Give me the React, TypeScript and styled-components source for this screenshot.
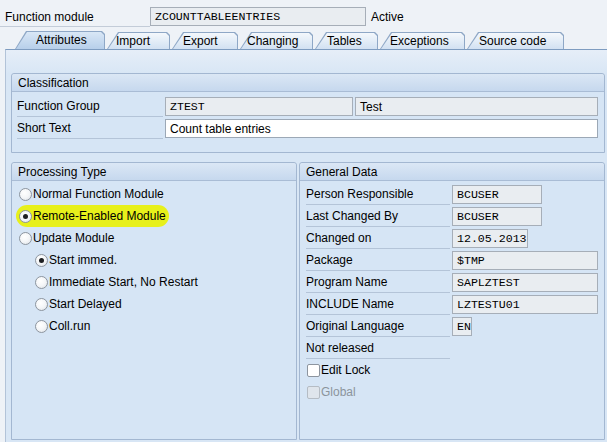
import React from 'react';
import styled, { createGlobalStyle } from 'styled-components';

const GlobalStyle = createGlobalStyle`
  html, body {
    margin: 0;
    padding: 0;
    background: #eef2f7;
  }
  body {
    font-family: 'Liberation Sans', Arial, sans-serif;
    font-size: 12px;
    color: #000;
  }
`;

const Page = styled.div`
  width: 607px;
  height: 442px;
  overflow: hidden;
  background: #eef2f7;
`;

const TopBar = styled.div`
  display: flex;
  align-items: center;
  height: 19px;
  padding-top: 7px;
`;

const TopLabel = styled.div`
  width: 150px;
  padding-left: 5px;
  height: 20px;
  line-height: 20px;
  border-bottom: 1px solid #c3ccd8;
  box-sizing: border-box;
`;

const Field = styled.div<{ $w: number; $editable?: boolean; $mono?: boolean }>`
  width: ${({ $w }) => $w}px;
  height: 19px;
  box-sizing: border-box;
  border: 1px solid ${({ $editable }) => ($editable ? '#9ca8b6' : '#a6aeb8')};
  background: ${({ $editable }) => ($editable ? '#ffffff' : '#e9edf1')};
  font-family: ${({ $mono }) =>
    $mono ? "'Liberation Mono', 'Courier New', monospace" : "'Liberation Sans', Arial, sans-serif"};
  font-size: ${({ $mono }) => ($mono ? '11.6px' : '12px')};
  line-height: 18px;
  padding-left: 4px;
  white-space: nowrap;
  overflow: hidden;
`;

const Status = styled.span`
  margin-left: 5px;
`;

const TabBar = styled.div`
  display: flex;
  align-items: flex-end;
  gap: 2px;
  height: 18px;
  margin-top: 5px;
  padding-left: 15px;
`;

const tabShape = 'polygon(11px 0, calc(100% - 3px) 0, 100% 3px, 100% 100%, 0 100%)';

const Tab = styled.div<{ $w: number; $active?: boolean }>`
  position: relative;
  width: ${({ $w }) => $w}px;
  height: ${({ $active }) => ($active ? 18 : 17)}px;
  background: #8ea7c6;
  clip-path: ${tabShape};

  &::before {
    content: '';
    position: absolute;
    inset: 1px 1px 0 1px;
    clip-path: ${tabShape};
    background: ${({ $active }) =>
      $active
        ? 'linear-gradient(#d9e7f6, #b7cfea)'
        : 'linear-gradient(#f4f8fc, #d2e1f2)'};
  }
`;

const TabText = styled.span<{ $pad: number }>`
  position: relative;
  display: block;
  padding-left: ${({ $pad }) => $pad}px;
  line-height: 19px;
  white-space: nowrap;
`;

const Panel = styled.div`
  margin-left: 5px;
  height: 393px;
  border-top: 1px solid #7e9cc0;
  border-left: 1px solid #b2c3d8;
  background: linear-gradient(#e6eef8 0px, #d8e6f5 24px, #d8e6f5);
  padding: 23px 0 0 5px;
  box-sizing: border-box;
`;

const Group = styled.div<{ $w: number; $h: number }>`
  width: ${({ $w }) => $w}px;
  height: ${({ $h }) => $h}px;
  box-sizing: border-box;
  border: 1px solid #a3b7d1;
  border-radius: 3px 3px 0 0;
  background: #d6e5f5;
`;

const GroupHeader = styled.div`
  height: 17px;
  line-height: 18px;
  padding-left: 6px;
  border-bottom: 1px solid #a9bcd5;
  background: linear-gradient(#dbe7f5, #c6d8ee);
  border-radius: 3px 3px 0 0;
`;

const GroupBody = styled.div<{ $top: number; $left: number }>`
  display: flex;
  flex-direction: column;
  padding: ${({ $top, $left }) => `${$top}px 0 0 ${$left}px`};
`;

const Columns = styled.div`
  display: flex;
  gap: 2px;
  margin-top: 9px;
`;

const Row = styled.div`
  display: flex;
  align-items: center;
  gap: 2px;
  height: 22px;
`;

const Label = styled.div<{ $w: number }>`
  width: ${({ $w }) => $w}px;
  height: 21px;
  line-height: 21px;
  box-sizing: border-box;
  border-bottom: 1px solid #b4c4d8;
  white-space: nowrap;
`;

const RadioRow = styled.div<{ $indent?: boolean; $marked?: boolean }>`
  display: flex;
  align-items: center;
  align-self: flex-start;
  height: 22px;
  line-height: 22px;
  margin-left: ${({ $indent }) => ($indent ? 20 : 4)}px;
  padding: 0 3px 0 3px;
  border-radius: 11px;
  background: ${({ $marked }) => ($marked ? '#e7f01b' : 'transparent')};
`;

const RadioDot = styled.span<{ $on?: boolean }>`
  position: relative;
  width: 13px;
  height: 13px;
  box-sizing: border-box;
  border-radius: 50%;
  border: 1px solid #8d959f;
  background: radial-gradient(circle at 40% 35%, #ffffff 0%, #f4f6f8 50%, #d9dee4 100%);
  margin-right: 1px;

  &::after {
    content: '';
    display: ${({ $on }) => ($on ? 'block' : 'none')};
    position: absolute;
    left: 3px;
    top: 3px;
    width: 5px;
    height: 5px;
    border-radius: 50%;
    background: #1d1f22;
  }
`;

const CheckRow = styled.div<{ $disabled?: boolean }>`
  display: flex;
  align-items: center;
  height: 22px;
  line-height: 22px;
  margin-left: 1px;
  color: ${({ $disabled }) => ($disabled ? '#8b949c' : '#000')};
`;

const CheckBox = styled.span<{ $disabled?: boolean }>`
  width: 13px;
  height: 13px;
  box-sizing: border-box;
  border: 1px solid ${({ $disabled }) => ($disabled ? '#b5bcc4' : '#8d959f')};
  border-radius: 2px;
  background: ${({ $disabled }) => ($disabled ? '#dfe5ec' : '#ffffff')};
  margin-right: 1px;
`;

const tabs = [
  { name: 'Attributes', w: 90, pad: 21, active: true },
  { name: 'Import', w: 63, pad: 9 },
  { name: 'Export', w: 66, pad: 11 },
  { name: 'Changing', w: 73, pad: 7 },
  { name: 'Tables', w: 63, pad: 12 },
  { name: 'Exceptions', w: 85, pad: 10 },
  { name: 'Source code', w: 97, pad: 12 },
];

const radios = [
  { text: 'Normal Function Module' },
  { text: 'Remote-Enabled Module', on: true, marked: true },
  { text: 'Update Module' },
  { text: 'Start immed.', on: true, indent: true },
  { text: 'Immediate Start, No Restart', indent: true },
  { text: 'Start Delayed', indent: true },
  { text: 'Coll.run', indent: true },
];

const general = [
  { label: 'Person Responsible', value: 'BCUSER', w: 90 },
  { label: 'Last Changed By', value: 'BCUSER', w: 90 },
  { label: 'Changed on', value: '12.05.2013', w: 76 },
  { label: 'Package', value: '$TMP', w: 146 },
  { label: 'Program Name', value: 'SAPLZTEST', w: 146 },
  { label: 'INCLUDE Name', value: 'LZTESTU01', w: 146 },
  { label: 'Original Language', value: 'EN', w: 20 },
];

export default function App() {
  return (
    <Page>
      <GlobalStyle />
      <TopBar>
        <TopLabel>Function module</TopLabel>
        <Field $w={216} $mono>ZCOUNTTABLEENTRIES</Field>
        <Status>Active</Status>
      </TopBar>

      <TabBar>
        {tabs.map((t) => (
          <Tab key={t.name} $w={t.w} $active={t.active}>
            <TabText $pad={t.pad}>{t.name}</TabText>
          </Tab>
        ))}
      </TabBar>

      <Panel>
        <Group $w={594} $h={80}>
          <GroupHeader>Classification</GroupHeader>
          <GroupBody $top={3} $left={5}>
            <Row>
              <Label $w={146}>Function Group</Label>
              <Field $w={188} $mono>ZTEST</Field>
              <Field $w={243}>Test</Field>
            </Row>
            <Row>
              <Label $w={146}>Short Text</Label>
              <Field $w={433} $editable>Count table entries</Field>
            </Row>
          </GroupBody>
        </Group>

        <Columns>
          <Group $w={286} $h={278}>
            <GroupHeader>Processing Type</GroupHeader>
            <GroupBody $top={2} $left={0}>
              {radios.map((r) => (
                <RadioRow key={r.text} $indent={r.indent} $marked={r.marked}>
                  <RadioDot $on={r.on} />
                  {r.text}
                </RadioRow>
              ))}
            </GroupBody>
          </Group>

          <Group $w={306} $h={278}>
            <GroupHeader>General Data</GroupHeader>
            <GroupBody $top={2} $left={6}>
              {general.map((g) => (
                <Row key={g.label}>
                  <Label $w={144}>{g.label}</Label>
                  <Field $w={g.w} $mono>{g.value}</Field>
                </Row>
              ))}
              <Row>
                <Label $w={144}>Not released</Label>
              </Row>
              <CheckRow>
                <CheckBox />
                Edit Lock
              </CheckRow>
              <CheckRow $disabled>
                <CheckBox $disabled />
                Global
              </CheckRow>
            </GroupBody>
          </Group>
        </Columns>
      </Panel>
    </Page>
  );
}
